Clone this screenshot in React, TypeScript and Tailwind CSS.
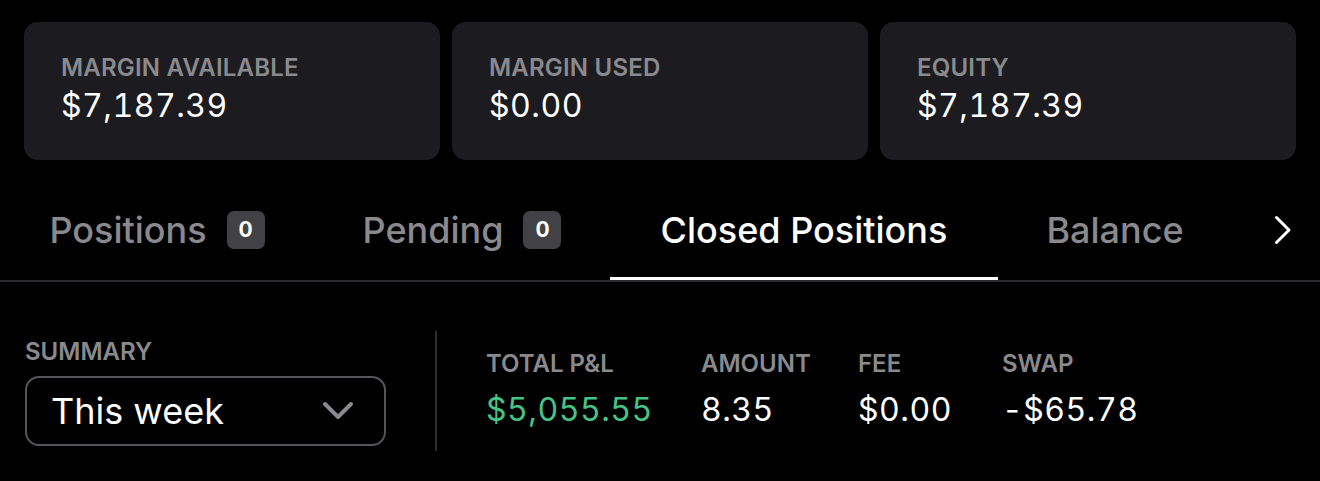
const cards = [
  { label: "MARGIN AVAILABLE", value: "$7,187.39" },
  { label: "MARGIN USED", value: "$0.00" },
  { label: "EQUITY", value: "$7,187.39" },
];

const tabs = [
  { name: "Positions", count: 0, width: "w-[314px]" },
  { name: "Pending", count: 0, width: "w-[296px]" },
  { name: "Closed Positions", active: true, width: "w-[388px]" },
  { name: "Balance", width: "w-[234px]" },
];

const stats = [
  { label: "TOTAL P&L", value: "$5,055.55", green: true, width: "w-[215px]" },
  { label: "AMOUNT", value: "8.35", width: "w-[157px]" },
  { label: "FEE", value: "$0.00", width: "w-[144px]" },
  { label: "SWAP", value: "-$65.78", width: "w-[200px]" },
];

const App = () => {
  return (
    <div className="w-[1320px] h-[481px] bg-black overflow-hidden font-['Inter',sans-serif] text-white">
      {/* Account cards */}
      <div className="flex gap-3 px-6 pt-[22px]">
        {cards.map(c => (
          <div key={c.label} className="w-[416px] h-[138px] rounded-[14px] bg-[#1c1c20] pl-[37px] pt-[32px]">
            <div className="text-[24px] leading-[28px] font-semibold tracking-[0.2px] text-[#8a8a8e]">{c.label}</div>
            <div className="mt-[5px] text-[32px] leading-[38px] tracking-[0.5px] tabular-nums">{c.value}</div>
          </div>
        ))}
      </div>

      {/* Tabs */}
      <div className="mt-5 flex h-[102px] border-b-2 border-[#2a2a2e]">
        {tabs.map(t => (
          <div key={t.name} className={`${t.width} relative flex items-center justify-center gap-5`}>
            <span className={`text-[36px] leading-[54px] font-medium ${t.active ? "text-white" : "text-[#8a8a8e]"}`}>
              {t.name}
            </span>
            {t.count !== undefined && (
              <span className="w-[38px] h-[38px] rounded-[7px] bg-[#424246] flex items-center justify-center text-[21px] font-bold text-white">
                {t.count}
              </span>
            )}
            {t.active && <div className="absolute left-0 right-0 bottom-0 h-[3px] bg-white" />}
          </div>
        ))}
        <div className="flex-1 flex items-center justify-end pr-[28px]">
          <svg width="18" height="30" viewBox="0 0 18 30" fill="none">
            <polyline points="2.5,2.5 15,15 2.5,27.5" stroke="white" strokeWidth="3" strokeLinecap="round" strokeLinejoin="round" />
          </svg>
        </div>
      </div>

      {/* Summary */}
      <div className="flex items-start pt-[49px] pl-[25px]">
        <div className="w-[361px] pt-[9px]">
          <div className="text-[24px] leading-[24px] font-semibold text-[#8a8a8e]">SUMMARY</div>
          <div className="mt-[12px] h-[70px] rounded-[14px] border-2 border-[#56565a] flex items-center justify-between pl-[24px] pr-[30px]">
            <span className="text-[36px] leading-[44px]">This week</span>
            <svg width="32" height="22" viewBox="0 0 32 22" fill="none">
              <polyline points="3,4 16,17 29,4" stroke="#8a8a8e" strokeWidth="4" strokeLinecap="round" strokeLinejoin="round" />
            </svg>
          </div>
        </div>
        <div className="ml-[49px] w-[2px] h-[120px] bg-[#2e2e32]" />
        <div className="flex pl-[49px] pt-[21px]">
          {stats.map(s => (
            <div key={s.label} className={s.width}>
              <div className="text-[24px] leading-[24px] font-semibold text-[#8a8a8e]">{s.label}</div>
              <div
                className={`mt-[15px] text-[32px] leading-[38px] tracking-[0.5px] tabular-nums ${s.green ? "text-[#46c486]" : "text-white"}`}
              >
                {s.value}
              </div>
            </div>
          ))}
        </div>
      </div>
    </div>
  );
};

export default App;
